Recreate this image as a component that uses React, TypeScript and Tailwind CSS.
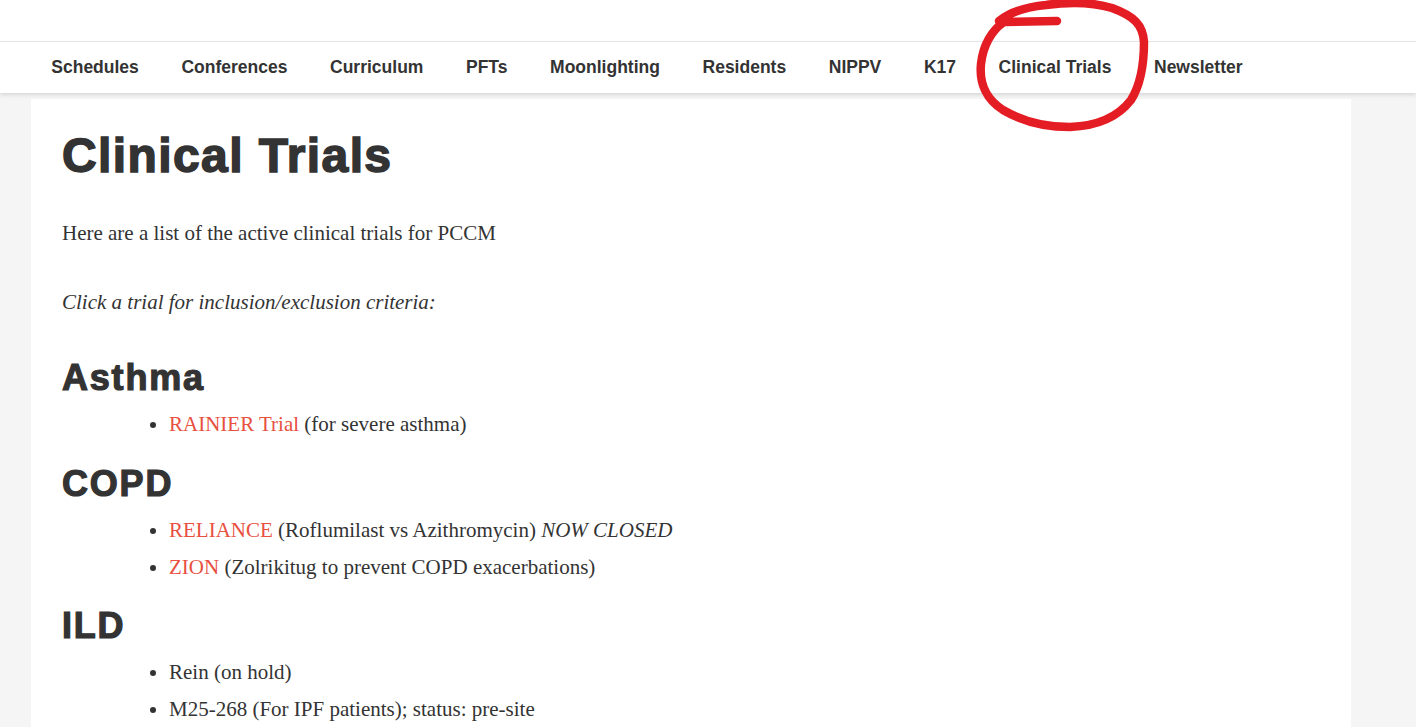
// Clinical Trials page with nav bar and a hand-drawn circle annotation

const navItems = [
  "Schedules",
  "Conferences",
  "Curriculum",
  "PFTs",
  "Moonlighting",
  "Residents",
  "NIPPV",
  "K17",
  "Clinical Trials",
  "Newsletter",
];

const sans = "font-['Liberation_Sans',Arial,sans-serif]";
const serif = "font-['Liberation_Serif','Times_New_Roman',serif]";
const h2Class = `${sans} text-[36px] leading-[42px] font-bold tracking-[1.8px] [-webkit-text-stroke:1.2px_#333]`;

const HandCircle: React.FC = () => (
  <svg
    className="absolute left-[970px] top-0 pointer-events-none z-20"
    width="190"
    height="140"
    viewBox="970 0 190 140"
    fill="none"
  >
    <path
      d="M1057 21 L1004 22 C992 30 983 45 981 64 C979 84 987 100 1003 110 C1022 121 1045 127 1070 127 C1096 126 1118 117 1131 100 C1141 84 1144 62 1144 42 C1143 25 1134 16 1112 8 C1092 2 1068 2 1046 5 C1026 7 1010 12 999 21"
      stroke="#e31d23"
      strokeWidth="8.5"
      strokeLinecap="round"
      strokeLinejoin="round"
    />
  </svg>
);

const App: React.FC = () => {
  return (
    <div className="relative min-h-screen bg-[#f5f5f5] overflow-hidden">
      <div className="h-[42px] bg-white border-b border-[#e6e8ec]" />
      <nav className={`relative z-10 h-[51px] bg-white shadow-[0_2px_4px_rgba(0,0,0,0.12)] flex items-center pl-[30px] ${sans}`}>
        {navItems.map((item) => (
          <a key={item} className="px-[21.3px] text-[17.5px] font-bold text-[#333] whitespace-nowrap">
            {item}
          </a>
        ))}
      </nav>

      <main className="ml-[31px] mt-[6px] w-[1320px] bg-white px-[31px] pt-[29px] pb-10 text-[#333]">
        <h1 className={`${sans} text-[48px] leading-[56px] font-bold tracking-[1.4px] [-webkit-text-stroke:1.5px_#333]`}>
          Clinical Trials
        </h1>
        <p className={`${serif} mt-[34px] text-[21px] leading-[30px]`}>
          Here are a list of the active clinical trials for PCCM
        </p>
        <p className={`${serif} mt-[39px] text-[21px] leading-[30px] italic`}>
          Click a trial for inclusion/exclusion criteria:
        </p>

        <h2 className={`${h2Class} mt-[40px]`}>Asthma</h2>
        <ul className={`${serif} mt-[10px] list-disc pl-[107px] text-[21px] leading-[30px]`}>
          <li>
            <a className="text-[#e8503f]">RAINIER Trial</a> (for severe asthma)
          </li>
        </ul>

        <h2 className={`${h2Class} mt-[24px]`}>COPD</h2>
        <ul className={`${serif} mt-[10px] list-disc pl-[107px] text-[21px] leading-[30px] space-y-[7px]`}>
          <li>
            <a className="text-[#e8503f]">RELIANCE</a> (Roflumilast vs Azithromycin) <em>NOW CLOSED</em>
          </li>
          <li>
            <a className="text-[#e8503f]">ZION</a> (Zolrikitug to prevent COPD exacerbations)
          </li>
        </ul>

        <h2 className={`${h2Class} mt-[23px]`}>ILD</h2>
        <ul className={`${serif} mt-[10px] list-disc pl-[107px] text-[21px] leading-[30px] space-y-[7px]`}>
          <li>Rein (on hold)</li>
          <li>M25-268 (For IPF patients); status: pre-site</li>
        </ul>
      </main>

      <HandCircle />
    </div>
  );
};

export default App;
